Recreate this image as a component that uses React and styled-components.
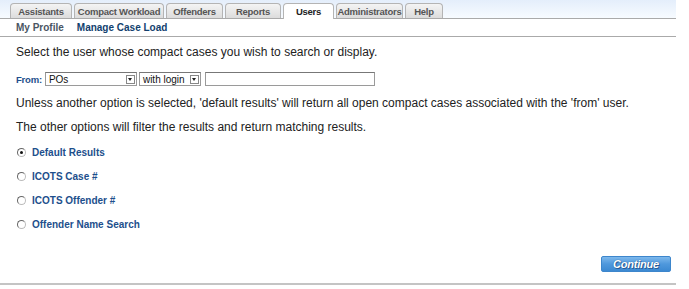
import React, { useState } from 'react';
import styled, { createGlobalStyle } from 'styled-components';

const GlobalStyle = createGlobalStyle`
	body {
		margin: 0;
		background: #fff;
		font-family: "Liberation Sans", Arial, sans-serif;
	}
`;

const Page = styled.div`
	width: 676px;
	height: 285px;
	display: flex;
	flex-direction: column;
`;

const TabBar = styled.div`
	height: 18px;
	display: flex;
	align-items: flex-end;
	gap: 2px;
	padding-left: 10px;
	background: linear-gradient(#e4eefb, #f7fbff);
	border-bottom: 1px solid #aaa;
`;

const Tab = styled.div`
	width: ${p => p.w}px;
	box-sizing: border-box;
	height: ${p => (p.active ? '16px' : '15px')};
	display: flex;
	align-items: center;
	justify-content: center;
	font-size: 9.5px;
	font-weight: bold;
	letter-spacing: -0.25px;
	white-space: nowrap;
	color: ${p => (p.active ? '#222' : '#555')};
	background: ${p => (p.active ? '#fff' : 'linear-gradient(#f4f4f4, #dcdcdc)')};
	border: 1px solid #b4b4b4;
	border-bottom: none;
	border-radius: 4px 4px 0 0;
	margin-bottom: ${p => (p.active ? '-1px' : '0')};
	position: relative;
`;

const SubNav = styled.div`
	height: 17px;
	display: flex;
	align-items: center;
	gap: 13px;
	padding-left: 16px;
	border-bottom: 1px solid #aaa;
	font-size: 10px;
	font-weight: bold;
`;

const SubLink = styled.span`
	color: ${p => (p.current ? '#123f6e' : '#4a5563')};
`;

const Content = styled.div`
	flex: 1;
	display: flex;
	flex-direction: column;
	padding: 0 5px 0 16px;
	border-bottom: 2px solid #c4c4c4;
`;

const Text = styled.p`
	margin: ${p => p.mt}px 0 0;
	font-size: 12px;
	color: #222;
	line-height: 14px;
`;

const FromRow = styled.div`
	margin-top: 12px;
	display: flex;
	align-items: center;
	gap: 2px;
	height: 16px;
`;

const Label = styled.span`
	font-size: 9.5px;
	font-weight: bold;
	letter-spacing: -0.2px;
	color: #1d4f8c;
	margin-right: 1px;
`;

const FakeSelect = styled.div`
	width: ${p => p.w}px;
	height: 14px;
	box-sizing: border-box;
	border: 1px solid #9a9a9a;
	border-top-color: #777;
	display: flex;
	align-items: center;
	justify-content: space-between;
	padding-left: 3px;
	font-size: 10px;
	color: #111;
	background: #fff;
`;

const Arrow = styled.span`
	width: 9px;
	height: 9px;
	margin-right: 1px;
	border: 1px solid #888;
	box-sizing: border-box;
	display: flex;
	align-items: center;
	justify-content: center;
	&::after {
		content: '';
		border-left: 2px solid transparent;
		border-right: 2px solid transparent;
		border-top: 3px solid #222;
	}
`;

const TextInput = styled.input`
	width: 170px;
	height: 14px;
	box-sizing: border-box;
	margin-left: 2px;
	border: 1px solid #9a9a9a;
	border-top-color: #777;
	padding: 0;
`;

const Options = styled.div`
	margin-top: 12px;
	display: flex;
	flex-direction: column;
	gap: 12px;
`;

const Option = styled.label`
	display: flex;
	align-items: center;
	gap: 6px;
	height: 12px;
	font-size: 10px;
	font-weight: bold;
	color: #1d4f8c;
`;

const Radio = styled.span`
	width: 7px;
	height: 7px;
	margin-left: 1px;
	border-radius: 50%;
	border: 1px solid #bbb;
	border-top-color: #666;
	border-left-color: #666;
	display: flex;
	align-items: center;
	justify-content: center;
	&::after {
		content: '';
		width: 3px;
		height: 3px;
		border-radius: 50%;
		background: ${p => (p.checked ? '#111' : 'transparent')};
	}
`;

const Footer = styled.div`
	margin-top: auto;
	margin-bottom: 11px;
	display: flex;
	justify-content: flex-end;
`;

const Continue = styled.button`
	width: 70px;
	height: 16px;
	padding: 0;
	border: 1px solid #3d86cc;
	border-radius: 2px;
	background: linear-gradient(#7db8ec, #4f98dc 50%, #3c89d2);
	color: #fff;
	font-family: "Liberation Sans", Arial, sans-serif;
	font-size: 11px;
	font-weight: bold;
	font-style: italic;
	letter-spacing: -0.2px;
	text-shadow: 0 0 1px #1f4f86, 1px 1px 0 #2a5e99;
`;

const tabs = [
	{ name: 'Assistants', w: 62 },
	{ name: 'Compact Workload', w: 90 },
	{ name: 'Offenders', w: 57 },
	{ name: 'Reports', w: 56 },
	{ name: 'Users', w: 51, active: true },
	{ name: 'Administrators', w: 67 },
	{ name: 'Help', w: 38 }
];

const options = ['Default Results', 'ICOTS Case #', 'ICOTS Offender #', 'Offender Name Search'];

export default function App() {
	const [selected, setSelected] = useState(0);

	return (
		<Page>
			<GlobalStyle />
			<TabBar>
				{tabs.map(t => (
					<Tab key={t.name} active={t.active} w={t.w}>
						{t.name}
					</Tab>
				))}
			</TabBar>
			<SubNav>
				<SubLink>My Profile</SubLink>
				<SubLink current>Manage Case Load</SubLink>
			</SubNav>
			<Content>
				<Text mt={8}>Select the user whose compact cases you wish to search or display.</Text>
				<FromRow>
					<Label>From:</Label>
					<FakeSelect w={92}>
						POs
						<Arrow />
					</FakeSelect>
					<FakeSelect w={62}>
						with login
						<Arrow />
					</FakeSelect>
					<TextInput />
				</FromRow>
				<Text mt={9}>
					Unless another option is selected, 'default results' will return all open compact cases associated with the 'from' user.
				</Text>
				<Text mt={10}>The other options will filter the results and return matching results.</Text>
				<Options>
					{options.map((o, i) => (
						<Option key={o} onClick={() => setSelected(i)}>
							<Radio checked={selected === i} />
							{o}
						</Option>
					))}
				</Options>
				<Footer>
					<Continue>Continue</Continue>
				</Footer>
			</Content>
		</Page>
	);
}
